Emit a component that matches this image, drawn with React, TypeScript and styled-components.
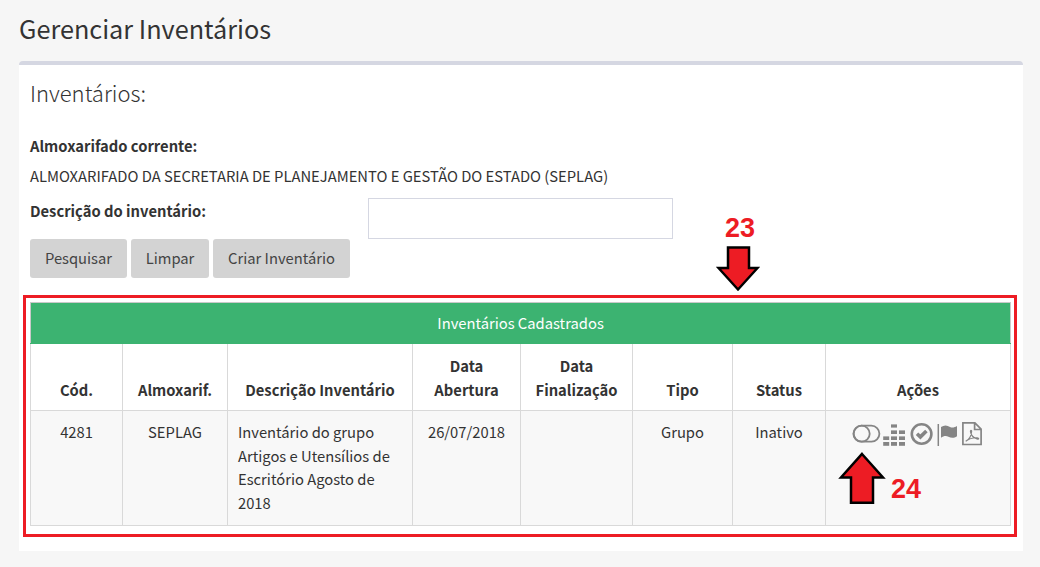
import React from "react";
import styled, { createGlobalStyle } from "styled-components";

const GlobalStyle = createGlobalStyle`
  * { box-sizing: border-box; }
  body {
    margin: 0;
    background: #f6f6f6;
    color: #333;
    font-family: "Noto Sans CJK SC", "Noto Sans", sans-serif;
    font-size: 14.75px;
    line-height: 23.5px;
  }
`;

const Page = styled.main`
  width: 1040px;
  height: 567px;
  padding: 9px 17px 0 19px;
  overflow: hidden;
`;

const PageTitle = styled.h1`
  margin: 0;
  height: 52px;
  font-size: 25.25px;
  line-height: 38px;
  font-weight: 400;
`;

const Card = styled.section`
  width: 1004px;
  height: 490px;
  padding: 0 4px;
  background: #fff;
  border-top: 4px solid #d5d7e2;
  border-radius: 4px 4px 0 0;
`;

const Form = styled.form`
  height: 230px;
  padding: 10px 7px 0;
`;

const SectionTitle = styled.h2`
  margin: 0 0 24px;
  font-size: 22px;
  line-height: 35px;
  font-weight: 300;
`;

const Label = styled.label`
  display: block;
  font-weight: 700;
`;

const CurrentStore = styled.p`
  margin: 6px 0 11px;
  line-height: 24px;
`;

const Field = styled.div`
  display: grid;
  grid-template-columns: 338px 304px;
  height: 40px;
  align-items: start;
`;

const TextInput = styled.input`
  height: 41px;
  width: 305px;
  border: 1px solid #d5d7e2;
  margin-top: -1px;
  background: #fff;
  padding: 0 12px;
  font: inherit;
`;

const Buttons = styled.div`
  display: flex;
  gap: 4px;
`;

const Button = styled.button<{ $width: number }>`
  width: ${(p) => p.$width}px;
  height: 39px;
  padding: 0;
  border: 0;
  border-radius: 3px;
  background: #d3d3d3;
  color: #444;
  font: inherit;
`;

const Highlight = styled.div`
  position: relative;
  width: 994px;
  height: 242px;
  padding: 4px 3px 0 4px;
  border: 3px solid #ed1c24;
`;

const Table = styled.table`
  width: 981px;
  table-layout: fixed;
  border-collapse: collapse;
`;

const Caption = styled.th`
  height: 41px;
  padding: 0;
  background: #3cb371;
  color: #fff;
  font-weight: 400;
  border: 1px solid #c9c9c9;
  border-bottom-color: #3cb371;
`;

const HeadCell = styled.th`
  height: 67px;
  padding: 10px 0 9px;
  vertical-align: bottom;
  border: 1px solid #d9d9d9;
  border-top: 0;
`;

const Cell = styled.td<{ $left?: boolean }>`
  height: 115px;
  padding: 9px 0 0 ${(p) => (p.$left ? "10px" : "0")};
  text-align: ${(p) => (p.$left ? "left" : "center")};
  vertical-align: top;
  background: #f8f8f8;
  border: 1px solid #d9d9d9;
`;

const ActionIcons = styled.svg`
  display: block;
  width: 132px;
  height: 26px;
  margin: 1px 0 0 26px;
`;

const Marker = styled.div<{ $x: number; $y: number }>`
  position: absolute;
  left: ${(p) => p.$x}px;
  top: ${(p) => p.$y}px;
  color: #ed1c24;
  font: 700 27px/28px "Liberation Sans", Arial, sans-serif;
`;

const Arrow = styled.svg<{ $x: number; $y: number }>`
  position: absolute;
  left: ${(p) => p.$x}px;
  top: ${(p) => p.$y}px;
  fill: #ed1c24;
  stroke: #000;
  stroke-width: 2.5;
`;

const widths = [92, 105, 185, 108, 112, 100, 93, 185];

function Actions() {
  return (
    <ActionIcons viewBox="852 421 132 26" fill="none" stroke="#858585">
      <g strokeWidth="1.8">
        <rect x="853.4" y="425.7" width="26" height="16" rx="8" />
        <circle cx="861.7" cy="433.7" r="8" />
      </g>
      <g fill="#858585" stroke="none">
        <rect x="883.2" y="436.4" width="6" height="3.6" />
        <rect x="883.2" y="442" width="6" height="3.8" />
        <rect x="891" y="424.4" width="6" height="3.2" />
        <rect x="891" y="430.4" width="6" height="3.6" />
        <rect x="891" y="436.4" width="6" height="3.6" />
        <rect x="891" y="442" width="6" height="3.8" />
        <rect x="899" y="430.4" width="6" height="3.6" />
        <rect x="899" y="436.4" width="6" height="3.6" />
        <rect x="899" y="442" width="6" height="3.8" />
      </g>
      <circle cx="921.6" cy="434" r="9.8" strokeWidth="2.6" />
      <path d="M917 433.700l3.400 3.200 6-5.900" strokeWidth="3.600" />
      <path d="M938.300 424v22" strokeWidth="1.500" />
      <path
        d="M941 427c3-2 6-2 9 0 2.500 1.100 4.600.4 7-1v10.300c-3 2-6 1.800-8.600.4-2.500-1.200-5-.6-7.400 1z"
        fill="#858585"
        stroke="none"
      />
      <path d="M962.900 422.900h12l6.200 6.200v15.400h-18.200zM974.600 423v6.500h6.400" strokeWidth="1.700" />
      <path
        d="M965.700 441.300c2.900-1.500 5.500-5.500 5.900-9.600.1-2-1.300-1.900-1.100 0 .5 3.500 3 6.200 6.500 7.300 2 .5 2.300-1 .2-1.200-4.500-.3-8.700 1.400-11.500 3.500z"
        strokeWidth="1.200"
      />
    </ActionIcons>
  );
}

export default function App() {
  return (
    <>
      <GlobalStyle />
      <Page>
        <PageTitle>Gerenciar Inventários</PageTitle>
        <Card>
          <Form>
            <SectionTitle>Inventários:</SectionTitle>
            <Label as="div">Almoxarifado corrente:</Label>
            <CurrentStore>ALMOXARIFADO DA SECRETARIA DE PLANEJAMENTO E GESTÃO DO ESTADO (SEPLAG)</CurrentStore>
            <Field>
              <Label htmlFor="descricao">Descrição do inventário:</Label>
              <TextInput id="descricao" />
            </Field>
            <Buttons>
              <Button type="button" $width={97}>Pesquisar</Button>
              <Button type="button" $width={78}>Limpar</Button>
              <Button type="button" $width={137}>Criar Inventário</Button>
            </Buttons>
          </Form>
          <Highlight>
            <Table>
              <colgroup>
                {widths.map((w, i) => (
                  <col key={i} width={w} />
                ))}
              </colgroup>
              <thead>
                <tr>
                  <Caption colSpan={8}>Inventários Cadastrados</Caption>
                </tr>
                <tr>
                  <HeadCell>Cód.</HeadCell>
                  <HeadCell>Almoxarif.</HeadCell>
                  <HeadCell>Descrição Inventário</HeadCell>
                  <HeadCell>Data<br />Abertura</HeadCell>
                  <HeadCell>Data<br />Finalização</HeadCell>
                  <HeadCell>Tipo</HeadCell>
                  <HeadCell>Status</HeadCell>
                  <HeadCell>Ações</HeadCell>
                </tr>
              </thead>
              <tbody>
                <tr>
                  <Cell>4281</Cell>
                  <Cell>SEPLAG</Cell>
                  <Cell $left>
                    Inventário do grupo<br />Artigos e Utensílios de<br />Escritório Agosto de<br />2018
                  </Cell>
                  <Cell>26/07/2018</Cell>
                  <Cell />
                  <Cell>Grupo</Cell>
                  <Cell>Inativo</Cell>
                  <Cell><Actions /></Cell>
                </tr>
              </tbody>
            </Table>
            <Marker $x={699} $y={-84}>23</Marker>
            <Arrow $x={690} $y={-53} width="44" height="48" viewBox="716 245 44 48">
              <path d="M728 247.500h21v20.500h8.500l-19.500 21.500-19.500-21.500h9.500z" />
            </Arrow>
            <Marker $x={865} $y={177}>24</Marker>
            <Arrow $x={812} $y={153} width="48" height="54" viewBox="838 451 48 54">
              <path d="M862 454l21 23.500h-10v25.300h-22v-25.300h-10z" />
            </Arrow>
          </Highlight>
        </Card>
      </Page>
    </>
  );
}
